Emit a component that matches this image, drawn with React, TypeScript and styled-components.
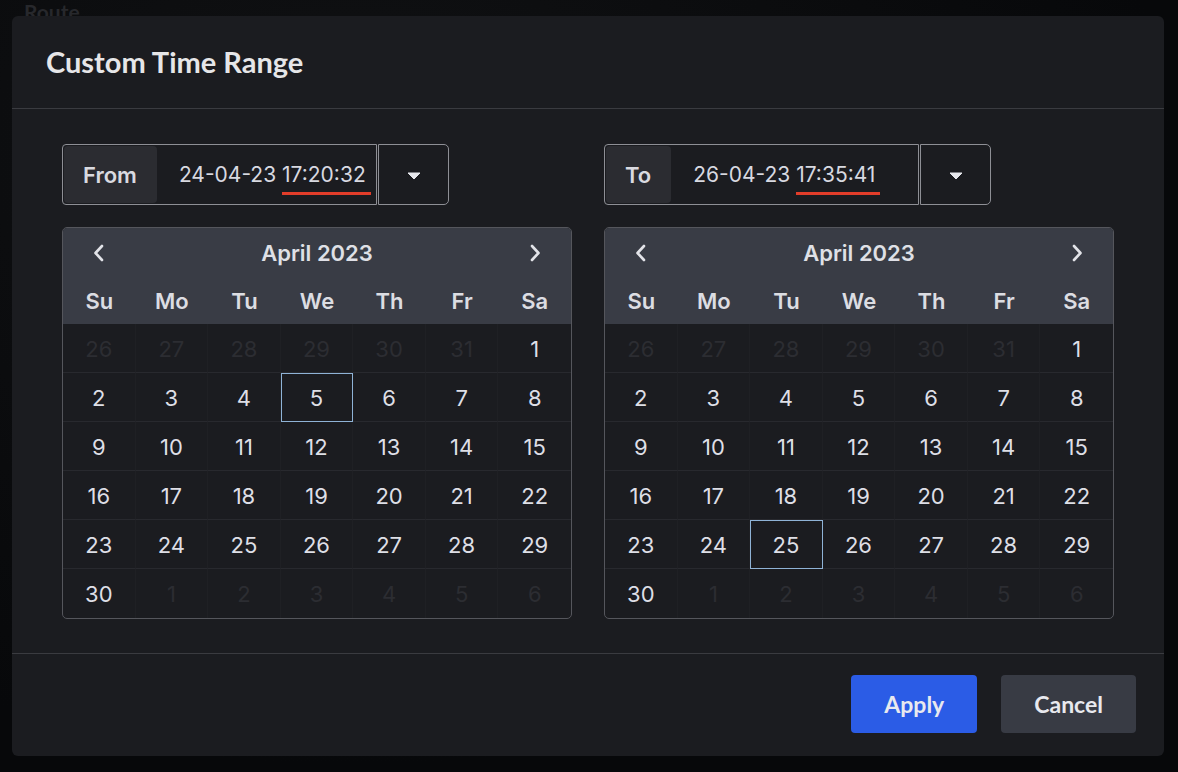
import styled, { createGlobalStyle, css } from "styled-components";

const GlobalStyle = createGlobalStyle`
  html, body {
    margin: 0;
    padding: 0;
    background: #07080a;
  }
  * {
    box-sizing: border-box;
  }
`;

type Day = { n: number; muted?: boolean };

const buildMonth = (): Day[] => {
  const days: Day[] = [];
  [26, 27, 28, 29, 30, 31].forEach((n) => days.push({ n, muted: true }));
  for (let i = 1; i <= 30; i++) days.push({ n: i });
  [1, 2, 3, 4, 5, 6].forEach((n) => days.push({ n, muted: true }));
  return days;
};

const WEEKDAYS = ["Su", "Mo", "Tu", "We", "Th", "Fr", "Sa"];

type CalendarProps = { selected: number };

function Calendar({ selected }: CalendarProps) {
  const days = buildMonth();
  return (
    <CalendarBox>
      <CalendarHead>
        <MonthRow>
          <NavButton aria-label='Previous month'>
            <svg width='14' height='20' viewBox='0 0 14 20'>
              <path d='M10 3 L3.5 10 L10 17' fill='none' stroke='#e2e3e8' strokeWidth='2.6' strokeLinecap='round' strokeLinejoin='round' />
            </svg>
          </NavButton>
          <MonthTitle>April 2023</MonthTitle>
          <NavButton aria-label='Next month'>
            <svg width='14' height='20' viewBox='0 0 14 20'>
              <path d='M4 3 L10.5 10 L4 17' fill='none' stroke='#e2e3e8' strokeWidth='2.6' strokeLinecap='round' strokeLinejoin='round' />
            </svg>
          </NavButton>
        </MonthRow>
        <WeekRow>
          {WEEKDAYS.map((d) => (
            <WeekDay key={d}>{d}</WeekDay>
          ))}
        </WeekRow>
      </CalendarHead>
      <DaysGrid>
        {days.map((d, i) => (
          <DayCell key={i} $muted={d.muted} $selected={!d.muted && d.n === selected}>
            {d.n}
          </DayCell>
        ))}
      </DaysGrid>
    </CalendarBox>
  );
}

type RangeInputProps = { label: string; date: string; time: string };

function RangeInput({ label, date, time }: RangeInputProps) {
  return (
    <InputGroup>
      <InputBox>
        <InputLabel>{label}</InputLabel>
        <InputValue>
          {date} <Marked>{time}</Marked>
        </InputValue>
      </InputBox>
      <DropButton aria-label='Open'>
        <svg width='14' height='8' viewBox='0 0 14 8'>
          <path d='M1 1 L13 1 L7 7 Z' fill='#e6e7ec' stroke='#e6e7ec' strokeWidth='1' strokeLinejoin='round' />
        </svg>
      </DropButton>
    </InputGroup>
  );
}

export default function App() {
  return (
    <>
      <GlobalStyle />
      <Backdrop>
        <MapLabel>Route</MapLabel>
        <Modal>
          <Header>
            <Title>Custom Time Range</Title>
          </Header>
          <Body>
            <Column>
              <RangeInput label='From' date='24-04-23' time='17:20:32' />
              <Calendar selected={5} />
            </Column>
            <Column>
              <RangeInput label='To' date='26-04-23' time='17:35:41' />
              <Calendar selected={25} />
            </Column>
          </Body>
          <Footer>
            <ActionButton $primary>Apply</ActionButton>
            <ActionButton>Cancel</ActionButton>
          </Footer>
        </Modal>
      </Backdrop>
    </>
  );
}

/*
=========== STYLES =================
*/
const Backdrop = styled.div`
  position: relative;
  width: 1178px;
  height: 772px;
  padding: 16px 14px 16px 12px;
  background: radial-gradient(ellipse at 30% 20%, #101113 0%, #07080a 70%);
  overflow: hidden;
`;

const MapLabel = styled.span`
  position: absolute;
  left: 24px;
  top: 1px;
  line-height: 1;
  font-family: "Lato", sans-serif;
  font-weight: 700;
  font-size: 21px;
  color: #27282c;
`;

const Modal = styled.div`
  position: relative;
  display: flex;
  flex-direction: column;
  height: 740px;
  background: #1b1c20;
  border-radius: 6px;
  overflow: hidden;
`;

const Header = styled.div`
  height: 93px;
  display: flex;
  align-items: center;
  padding: 0 34px;
  border-bottom: 1px solid #3a3b40;
`;

const Title = styled.h2`
  margin: 0;
  padding-bottom: 2px;
  font-family: "Lato", sans-serif;
  font-weight: 700;
  font-size: 29px;
  color: #e6e6e8;
`;

const Body = styled.div`
  display: grid;
  grid-template-columns: 510px 510px;
  column-gap: 32px;
  padding: 35px 50px 34px;
  border-bottom: 1px solid #3a3b40;
`;

const Column = styled.div`
  display: flex;
  flex-direction: column;
  gap: 22px;
`;

const InputGroup = styled.div`
  display: flex;
  gap: 1px;
  height: 61px;
`;

const InputBox = styled.div`
  width: 315px;
  display: flex;
  align-items: stretch;
  border: 1px solid #8e8f95;
  border-radius: 4px 0 0 4px;
  padding: 1px;
`;

const InputLabel = styled.div`
  display: flex;
  align-items: center;
  padding: 0 20px 0 19px;
  background: #2b2c31;
  border-radius: 4px;
  font-family: "Inter", sans-serif;
  font-weight: 600;
  font-size: 22px;
  color: #d9dae0;
`;

const InputValue = styled.div`
  display: flex;
  align-items: center;
  padding-left: 22px;
  font-family: "Inter", sans-serif;
  font-size: 21px;
  color: #d8d9e0;
  white-space: pre;
`;

const Marked = styled.span`
  position: relative;

  &::after {
    content: "";
    position: absolute;
    left: 0;
    right: -5px;
    bottom: -8px;
    height: 3px;
    background: #e23d2a;
  }
`;

const DropButton = styled.button`
  width: 71px;
  display: flex;
  align-items: center;
  justify-content: center;
  background: transparent;
  border: 1px solid #8e8f95;
  border-radius: 0 5px 5px 0;
  padding: 0;
  padding-top: 2px;
  cursor: pointer;
`;

const CalendarBox = styled.div`
  border: 1px solid #55565c;
  border-radius: 5px;
  overflow: hidden;
  background: #1b1c20;
`;

const CalendarHead = styled.div`
  background: #393c45;
`;

const MonthRow = styled.div`
  height: 49px;
  display: flex;
  align-items: center;
  justify-content: space-between;
  padding: 0 29px 0 29px;
`;

const NavButton = styled.button`
  display: flex;
  align-items: center;
  background: transparent;
  border: 0;
  padding: 0;
  cursor: pointer;
`;

const MonthTitle = styled.div`
  font-family: "Inter", sans-serif;
  font-weight: 600;
  font-size: 22px;
  color: #dfe0e6;
`;

const WeekRow = styled.div`
  height: 47px;
  display: grid;
  grid-template-columns: repeat(7, 1fr);
  align-items: center;
`;

const WeekDay = styled.div`
  text-align: center;
  font-family: "Inter", sans-serif;
  font-weight: 600;
  font-size: 22px;
  color: #dcdde2;
`;

const DaysGrid = styled.div`
  display: grid;
  grid-template-columns: repeat(7, 1fr);
  grid-auto-rows: 49px;
`;

const DayCell = styled.div<{ $muted?: boolean; $selected?: boolean }>`
  display: flex;
  align-items: center;
  justify-content: center;
  padding-top: 1px;
  font-family: "Inter", sans-serif;
  font-size: 22px;
  color: ${(p) => (p.$muted ? "#2c2d32" : "#dedfe6")};
  border-right: 1px solid #1f2024;
  border-bottom: 1px solid #28292e;

  &:nth-child(7n) {
    border-right: 0;
  }

  &:nth-last-child(-n + 7) {
    border-bottom: 0;
  }

  ${(p) =>
    p.$selected &&
    css`
      outline: 1px solid #8fb3d6;
      outline-offset: -1px;
    `}
`;

const Footer = styled.div`
  flex: 1;
  display: flex;
  align-items: center;
  justify-content: flex-end;
  gap: 24px;
  padding: 0 28px 2px;
`;

const ActionButton = styled.button<{ $primary?: boolean }>`
  height: 58px;
  padding: 0 33px;
  border: 0;
  border-radius: 4px;
  font-family: "Lato", sans-serif;
  font-weight: 700;
  font-size: 23px;
  color: #e8e9ee;
  background: ${(p) => (p.$primary ? "#2b5ce6" : "#383b44")};
  cursor: pointer;
`;
